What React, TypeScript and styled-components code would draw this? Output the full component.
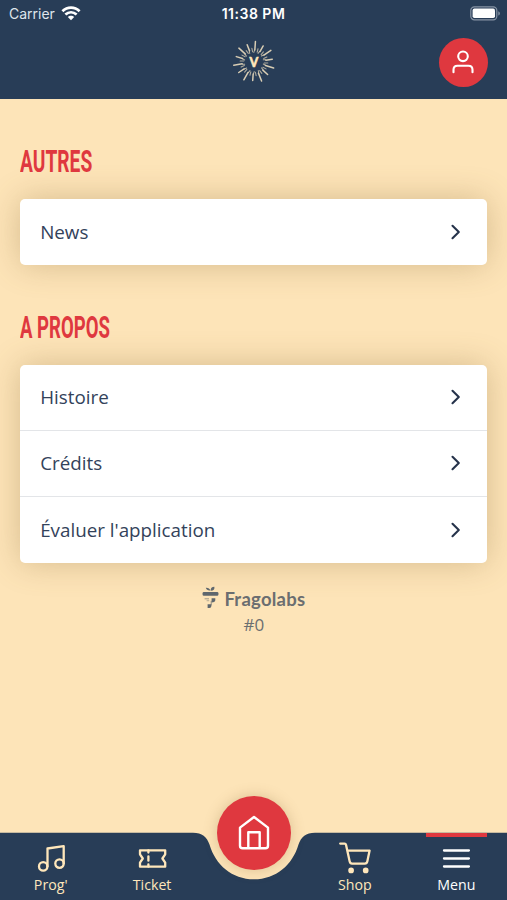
import React from 'react';
import styled, { createGlobalStyle } from 'styled-components';

const colors = {
  navy: '#283d57',
  red: '#df383f',
  sand: '#fde4b8',
  cream: '#ffe7bb',
  text: '#33425a',
  grey: '#6b6e70',
};

const sections = [
  { title: 'Autres', scale: 0.6, items: ['News'] },
  { title: 'A propos', scale: 0.58, items: ['Histoire', 'Crédits', "Évaluer l'application"] },
];

const SunLogo: React.FC = () => (
  <svg width="44" height="44" viewBox="-22 -22 44 44" fill="none" stroke="#d8cdb4" strokeLinecap="round">
    {Array.from({ length: 14 }, (_, i) => (
      <g key={i} transform={`rotate(${i * 25.714 + 4})`}>
        <path d={`M0 -12V-${i % 2 === 0 ? 20.5 : 18.5}`} strokeWidth="1.5" />
        <path d="M-0.8 -9.5L-0.3 -12" strokeWidth="1" opacity="0.8" />
        <path d="M2.5 -10L3.1 -13.5" strokeWidth="1.1" opacity="0.75" />
      </g>
    ))}
    <text
      x="0"
      y="5"
      textAnchor="middle"
      stroke="#ffe7bb"
      strokeWidth="0.5"
      fill="#ffe7bb"
      fontFamily="Lato, sans-serif"
      fontWeight="900"
      fontSize="12.5"
    >
      V
    </text>
  </svg>
);

const WifiIcon: React.FC = () => (
  <svg width="20" height="15" viewBox="0 0 20 15" fill="none" stroke="#fff" strokeWidth="2.7">
    <path d="M1.4 5.3C6.4 0.4 13.6 0.4 18.6 5.3" />
    <path d="M4.4 8.6C7.7 5.5 12.3 5.5 15.6 8.6" />
    <path d="M10 14.2L6.8 11C8.5 9.3 11.5 9.3 13.2 11Z" fill="#fff" stroke="none" />
  </svg>
);

const BatteryIcon: React.FC = () => (
  <svg width="31" height="15" viewBox="0 0 31 15">
    <rect x="0.8" y="0.8" width="26" height="13" rx="3.6" fill="none" stroke="#8794a5" strokeWidth="1.2" />
    <rect x="2.6" y="2.6" width="22.4" height="9.4" rx="1.8" fill="#fff" />
    <path d="M28.3 5.2C30.4 6 30.4 8.8 28.3 9.6Z" fill="#8794a5" />
  </svg>
);

const UserIcon: React.FC = () => (
  <svg width="28" height="28" viewBox="0 0 28 28" fill="none" stroke="#fff" strokeWidth="2.1" strokeLinecap="round">
    <circle cx="14" cy="8.3" r="4.8" />
    <path d="M4.5 24.2V21.8C4.5 19.4 6.1 17.7 8.5 17.7H19.5C21.9 17.7 23.5 19.4 23.5 21.8V24.2" />
  </svg>
);

const Chevron: React.FC = () => (
  <svg width="12" height="18" viewBox="0 0 12 18" fill="none" stroke="#26334b" strokeWidth="2.1" strokeLinecap="round" strokeLinejoin="round">
    <path d="M2.5 2.8L8.8 9L2.5 15.2" />
  </svg>
);

const FragolabsMark: React.FC = () => (
  <svg width="17" height="23" viewBox="0 0 17 23" fill="#5f676d">
    <path d="M3.8 1.8C6.2 1.6 7.8 2.6 8.2 4.4C6.2 4.7 4.4 3.8 3.8 1.8Z" />
    <path d="M8.6 4.8C8.4 2.2 9.8 0.8 12.4 0.7C12.8 3.3 11.5 4.9 8.6 4.8Z" />
    <rect x="0.6" y="6" width="15.8" height="3.7" rx="1.2" />
    <rect x="2.6" y="12.3" width="4.4" height="1" opacity="0.6" />
    <rect x="4.6" y="14.2" width="2.6" height="1" opacity="0.45" />
    <path d="M9.6 12.2H13.3V13.8C13.3 15.6 12.3 16.4 9.6 16.4Z" />
    <path d="M5.6 18.2H9.3V20.2C9.3 21.6 8.2 22 5.6 22Z" />
    <rect x="8.6" y="14.8" width="1.4" height="4.6" opacity="0.5" />
  </svg>
);

const MusicIcon: React.FC = () => (
  <IconSvg>
    <circle cx="8.2" cy="24.4" r="4.2" />
    <path d="M12.5 24.4V6.5L28.7 4.2V21.6" />
    <circle cx="24.5" cy="21.6" r="4.2" />
  </IconSvg>
);

const TicketIcon: React.FC = () => (
  <IconSvg>
    <path d="M4 8.3H29.2V12.3L26.4 16.5L29.2 20.7V24.7H4V20.7L6.8 16.5L4 12.3Z" />
    <path d="M12.4 8.5V10.6M12.4 14.3V18.7M12.4 22.3V24.5" />
  </IconSvg>
);

const CartIcon: React.FC = () => (
  <IconSvg>
    <path d="M1.2 1.6H5.6C6.4 1.6 6.8 2 7 2.8L10.7 19.6C11 20.9 11.7 21.6 13 21.6H25.9C27.2 21.6 28 20.9 28.3 19.6L30.6 8.6H8.3" />
    <circle cx="12.1" cy="28.4" r="1.7" fill="currentColor" />
    <circle cx="26.7" cy="28.4" r="1.7" fill="currentColor" />
  </IconSvg>
);

const MenuIcon: React.FC = () => (
  <IconSvg>
    <path d="M4 8.5H28.9M4 16.5H28.9M4 24.5H28.9" />
  </IconSvg>
);

const HomeIcon: React.FC = () => (
  <svg width="36" height="36" viewBox="0 0 36 36" fill="none" stroke="#fff" strokeWidth="2.4" strokeLinejoin="round">
    <path d="M4 12.6L18 2L32 12.6V30.7C32 32.3 31 33.3 29.4 33.3H6.6C5 33.3 4 32.3 4 30.7Z" />
    <path d="M12.3 33.3V17.2H23.7V33.3" />
  </svg>
);

const App: React.FC = () => {
  return (
    <Screen>
      <GlobalStyle />
      <Header>
        <StatusBar>
          <Carrier>
            Carrier
            <WifiIcon />
          </Carrier>
          <Clock>11:38 PM</Clock>
          <Battery>
            <BatteryIcon />
          </Battery>
        </StatusBar>
        <TopBar>
          <SunLogo />
          <ProfileButton aria-label="Profil">
            <UserIcon />
          </ProfileButton>
        </TopBar>
      </Header>

      <Content>
        {sections.map((section) => (
          <section key={section.title}>
            <SectionTitle>
              <Condensed $scale={section.scale}>{section.title}</Condensed>
            </SectionTitle>
            <List>
              {section.items.map((item) => (
                <ListRow key={item}>
                  {item}
                  <Chevron />
                </ListRow>
              ))}
            </List>
          </section>
        ))}
        <Footer>
          <Brand>
            <FragolabsMark />
            Fragolabs
          </Brand>
          <Version>#0</Version>
        </Footer>
      </Content>

      <NavBar>
        <NavShape width="507" height="68" viewBox="0 0 507 68">
          <path
            d="M0 0.7H193C202 0.7 207 5 209.5 12.5C215.5 33 232 47.3 254 47.3C276 47.3 292.5 33 298.5 12.5C301 5 306 0.7 315 0.7H507V68H0Z"
            fill={colors.navy}
          />
        </NavShape>
        <NavItem>
          <MusicIcon />
          Prog'
        </NavItem>
        <NavItem>
          <TicketIcon />
          Ticket
        </NavItem>
        <HomeSlot>
          <HomeButton aria-label="Accueil">
            <HomeIcon />
          </HomeButton>
        </HomeSlot>
        <NavItem>
          <CartIcon />
          Shop
        </NavItem>
        <NavItem $active>
          <MenuIcon />
          Menu
        </NavItem>
      </NavBar>
    </Screen>
  );
};

const GlobalStyle = createGlobalStyle`
  * {
    box-sizing: border-box;
  }

  body {
    margin: 0;
    font-family: 'Open Sans', 'Noto Sans', sans-serif;
  }
`;

const Screen = styled.div`
  display: flex;
  flex-direction: column;
  height: 900px;
  overflow: hidden;
  background-color: ${colors.sand};
`;

const Header = styled.header`
  height: 98.6px;
  background-color: ${colors.navy};
`;

const StatusBar = styled.div`
  display: grid;
  grid-template-columns: 1fr auto 1fr;
  align-items: center;
  height: 27px;
  padding: 0 6px 0 9px;
  font-family: Inter, sans-serif;
  color: #fff;
`;

const Carrier = styled.div`
  display: flex;
  align-items: center;
  gap: 6px;
  font-size: 14px;
  color: #dfe5ec;
`;

const Clock = styled.div`
  padding-right: 3px;
  font-size: 14px;
  font-weight: 600;
  letter-spacing: 0.5px;
`;

const Battery = styled.div`
  display: flex;
  justify-content: flex-end;
`;

const TopBar = styled.div`
  display: grid;
  grid-template-columns: 1fr 44px 1fr;
  align-items: center;
  height: 70px;
  padding: 0 19.5px;

  > svg {
    grid-column: 2;
  }
`;

const ProfileButton = styled.button`
  display: flex;
  align-items: center;
  justify-content: center;
  justify-self: end;
  width: 49px;
  height: 49px;
  padding: 0;
  border: 0;
  border-radius: 50%;
  background-color: ${colors.red};
`;

const Content = styled.main`
  flex: 1;
  padding: 0 19.6px 0 20.4px;
`;

const SectionTitle = styled.h2`
  height: 100px;
  margin: 0;
  padding-top: 41px;
  font-family: Roboto, sans-serif;
  font-size: 32px;
  font-weight: 700;
  line-height: 42px;
  color: ${colors.red};
  text-transform: uppercase;
`;

const Condensed = styled.span<{ $scale: number }>`
  display: inline-block;
  transform: scaleX(${({ $scale }) => $scale});
  transform-origin: left;
  white-space: nowrap;
`;

const List = styled.div`
  border-radius: 5px;
  background-color: #fff;
  box-shadow: 0 0 32px rgba(130, 100, 50, 0.32);
`;

const ListRow = styled.div`
  display: flex;
  align-items: center;
  justify-content: space-between;
  height: 66px;
  padding: 0 25.5px 0 19.8px;
  font-size: 18.8px;
  color: ${colors.text};

  &:not(:last-child) {
    border-bottom: 1px solid #e3e5e8;
  }
`;

const Footer = styled.footer`
  display: flex;
  flex-direction: column;
  align-items: center;
  padding-top: 23px;
  color: ${colors.grey};
`;

const Brand = styled.div`
  display: flex;
  align-items: center;
  gap: 5px;
  height: 26px;
  font-family: Lato, sans-serif;
  font-size: 18.5px;
  font-weight: 700;
  letter-spacing: 0.25px;

  > svg {
    margin-top: -3px;
  }
`;

const Version = styled.div`
  font-size: 17px;
  line-height: 25px;
`;

const NavBar = styled.nav`
  position: relative;
  display: grid;
  grid-template-columns: repeat(5, 1fr);
  height: 68px;
`;

const NavShape = styled.svg`
  position: absolute;
  top: 0;
  left: 0;
`;

const NavItem = styled.div<{ $active?: boolean }>`
  position: relative;
  display: flex;
  flex-direction: column;
  align-items: center;
  padding-top: 10px;
  font-size: 14.2px;
  line-height: 22px;
  color: ${({ $active }) => ($active ? '#fff' : colors.cream)};

  &::before {
    content: '';
    position: absolute;
    top: 0.7px;
    width: 61px;
    height: 4px;
    background-color: ${({ $active }) => ($active ? colors.red : 'transparent')};
  }
`;

const IconSvg = styled.svg.attrs({ viewBox: '0 0 32 32' })`
  flex: none;
  width: 32px;
  height: 32px;
  fill: none;
  stroke: currentColor;
  stroke-width: 2.3;
  stroke-linecap: round;
  stroke-linejoin: round;
`;

const HomeSlot = styled.div`
  position: relative;
  display: flex;
  justify-content: center;
  padding-left: 1px;
`;

const HomeButton = styled.button`
  display: flex;
  align-items: center;
  justify-content: center;
  width: 74px;
  height: 74px;
  margin-top: -36px;
  padding: 0;
  border: 0;
  border-radius: 50%;
  background-color: ${colors.red};
  box-shadow: 0 0 14px rgba(130, 100, 50, 0.28);
`;

export default App;
